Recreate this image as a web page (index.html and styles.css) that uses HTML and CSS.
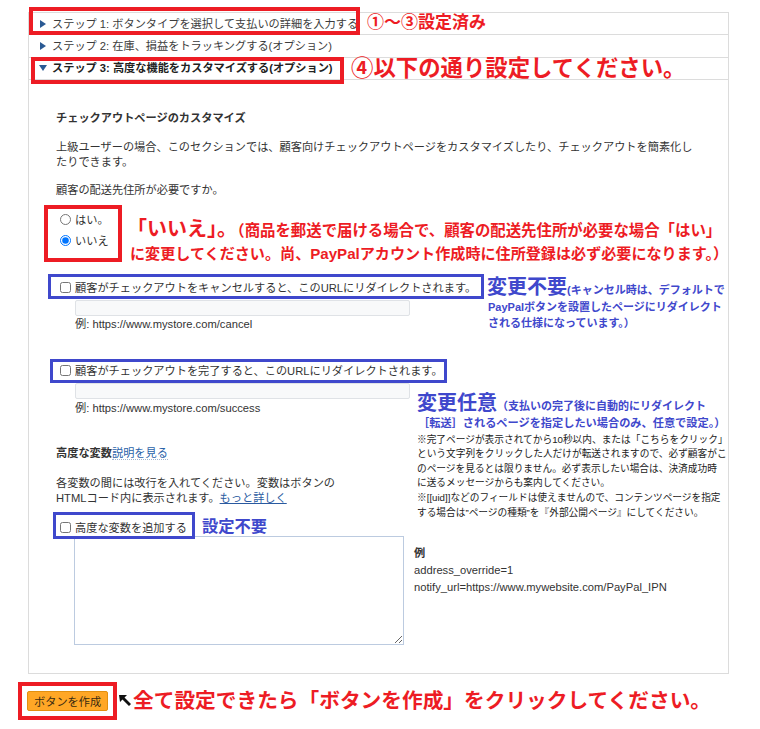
FILE: index.html
```html
<!DOCTYPE html>
<html lang="ja">
<head>
<meta charset="utf-8">
<title>ボタンの作成</title>
<link rel="stylesheet" href="styles.css">
</head>
<body>
<div class="page">
  <div class="steps">
    <div class="step"><span class="tri-r"></span>ステップ 1: ボタンタイプを選択して支払いの詳細を入力する</div>
    <div class="step"><span class="tri-r"></span>ステップ 2: 在庫、損益をトラッキングする(オプション)</div>
    <div class="step open"><span class="tri-d"></span>ステップ 3: 高度な機能をカスタマイズする(オプション)</div>
  </div>
  <div class="panel">
    <h3 class="title">チェックアウトページのカスタマイズ</h3>
    <p class="para">上級ユーザーの場合、このセクションでは、顧客向けチェックアウトページをカスタマイズしたり、チェックアウトを簡素化したりできます。</p>
    <p class="question">顧客の配送先住所が必要ですか。</p>
    <div class="radios">
      <label class="opt"><input type="radio" name="ship">はい。</label>
      <label class="opt"><input type="radio" name="ship" checked>いいえ</label>
    </div>
    <div class="redirect cancel">
      <label class="cb"><input type="checkbox">顧客がチェックアウトをキャンセルすると、このURLにリダイレクトされます。</label>
      <div class="field"></div>
      <p class="hint">例: https://www.mystore.com/cancel</p>
    </div>
    <div class="redirect success">
      <label class="cb"><input type="checkbox">顧客がチェックアウトを完了すると、このURLにリダイレクトされます。</label>
      <div class="field"></div>
      <p class="hint">例: https://www.mystore.com/success</p>
    </div>
    <div class="adv">
      <h4 class="adv-title">高度な変数<a class="help">説明を見る</a></h4>
      <p class="adv-desc">各変数の間には改行を入れてください。変数はボタンの<br>HTMLコード内に表示されます。<a class="more">もっと詳しく</a></p>
      <label class="cb adv-cb"><input type="checkbox">高度な変数を追加する</label>
      <div class="ta-row">
        <textarea class="vars"></textarea>
        <div class="example">
          <div class="ex-head">例</div>
          <div>address_override=1</div>
          <div>notify_url=https://www.mywebsite.com/PayPal_IPN</div>
        </div>
      </div>
    </div>
  </div>
  <button class="create" type="button">ボタンを作成</button>

  <div class="notes">
    <div class="box red r1"></div>
    <div class="box red r2"></div>
    <div class="box red r3"></div>
    <div class="box red r4"></div>
    <div class="box blue b1"></div>
    <div class="box blue b2"></div>
    <div class="box blue b3"></div>

    <div class="note red n1">①～③設定済み</div>
    <div class="note red n2">④以下の通り設定してください。</div>
    <div class="note red n3">
      <div class="n3-l1"><span class="big">「いいえ」。</span><span class="s1">（商品を郵送で届ける場合で、顧客の配送先住所が必要な場合「はい」</span></div>
      <div class="n3-l2">に変更してください。尚、PayPalアカウント作成時に住所登録は必ず必要になります。）</div>
    </div>
    <div class="note blue n4">
      <div class="l1"><span class="big">変更不要</span><span class="sm">(キャンセル時は、デフォルトで</span></div>
      <div class="l2">PayPalボタンを設置したページにリダイレクト</div>
      <div class="l2">される仕様になっています。）</div>
    </div>
    <div class="note blue n5">
      <div class="l1"><span class="big">変更任意</span><span class="sm">（支払いの完了後に自動的にリダイレクト</span></div>
      <div class="l2">［転送］されるページを指定したい場合のみ、任意で設定。）</div>
      <div class="small">※完了ページが表示されてから10秒以内、または「こちらをクリック」<br>という文字列をクリックした人だけが転送されますので、必ず顧客がこ<br>のページを見るとは限りません。必ず表示したい場合は、決済成功時<br>に送るメッセージからも案内してください。<br>※[[uid]]などのフィールドは使えませんので、コンテンツページを指定<br>する場合は”ページの種類”を『外部公開ページ』にしてください。</div>
    </div>
    <div class="note blue n6">設定不要</div>
    <svg class="arrow" width="14" height="14" viewBox="0 0 14 14"><path d="M1 2 L9 2 L6.5 4.5 L13 11 L11 13 L4.5 6.5 L2 9 Z" fill="#111"/></svg>
    <div class="note red n7">全て設定できたら「ボタンを作成」をクリックしてください。</div>
  </div>
</div>
</body>
</html>
```
FILE: styles.css
```css
* { box-sizing: border-box; }

body {
  margin: 0;
  background: #fff;
  font-family: "Liberation Sans", "Noto Sans CJK JP", sans-serif;
  font-size: 11.2px;
  color: #333;
}

.page {
  position: relative;
  width: 760px;
  height: 729px;
  padding-top: 12px;
  overflow: hidden;
}

/* accordion headers */
.steps {
  margin-left: 28px;
  width: 701px;
  border: 1px solid #dcdcdc;
  border-bottom: 0;
}
.step {
  height: 22.4px;
  border-bottom: 1px solid #dcdcdc;
  padding-left: 11px;
  display: flex;
  align-items: center;
  color: #3c3c3c;
  line-height: 14px;
}
.step.open { font-weight: bold; color: #222; padding-left: 10px; }
.tri-r {
  width: 0; height: 0;
  border-left: 6px solid #2a5a94;
  border-top: 4px solid transparent;
  border-bottom: 4px solid transparent;
  margin-right: 6px;
}
.tri-d {
  width: 0; height: 0;
  border-top: 6px solid #2a5a94;
  border-left: 4px solid transparent;
  border-right: 4px solid transparent;
  margin-right: 5px;
}

/* panel */
.panel {
  margin-left: 28px;
  width: 701px;
  border: 1px solid #dcdcdc;
  border-top: 0;
  padding: 30px 27px 28px 27px;
}
.title {
  margin: 0;
  font-size: 11.2px;
  line-height: 16px;
  font-weight: bold;
  color: #333;
}
.para, .question {
  margin: 14px 0 0;
  line-height: 14.4px;
}
.radios { margin-top: 11.3px; }
.opt {
  display: flex;
  align-items: center;
  height: 21px;
}
.opt input, .cb input {
  width: 11px;
  height: 11px;
  margin: 0 4px 0 4px;
}
.cb {
  display: flex;
  align-items: center;
  height: 18px;
}
.redirect.cancel { margin-top: 27.8px; }
.redirect.success { margin-top: 30.1px; }
.field {
  margin: 4px 0 0 19px;
  width: 335px;
  height: 16px;
  border: 1px solid #dfe2e6;
  border-radius: 2px;
  background: #f8f9fa;
}
.hint {
  margin: 0.5px 0 0 19px;
  line-height: 14.4px;
}
.success .hint { margin-top: 1.5px; }

.adv { margin-top: 30.1px; }
.adv-title {
  margin: 0;
  font-size: 11.2px;
  line-height: 16px;
  font-weight: bold;
}
.help {
  font-weight: normal;
  color: #2a62a8;
  border-bottom: 1px dotted #9fb4cf;
}
.adv-desc {
  margin: 15px 0 0;
  line-height: 14.4px;
}
.more {
  color: #2a5aa0;
  text-decoration: underline;
}
.adv-cb { margin-top: 13.2px; }
.ta-row {
  display: flex;
  margin-left: 18px;
}
.vars {
  display: block;
  width: 330px;
  height: 109px;
  margin: 0;
  border: 1px solid #bccbe0;
  background: #fff;
}
.example {
  margin-left: 10px;
  padding-top: 9px;
  line-height: 17px;
  color: #333;
}
.ex-head { font-weight: bold; }

.create {
  display: block;
  margin: 17px 0 0 27px;
  height: 20px;
  padding: 0 6px;
  font-family: "Liberation Sans", "Noto Sans CJK JP", sans-serif;
  font-size: 11.2px;
  color: #3a2a10;
  background: #ffa726;
  border: 1px solid #e3900f;
  border-radius: 2px;
}

/* annotation overlay */
.notes {
  position: absolute;
  inset: 0;
  pointer-events: none;
}
.box { position: absolute; }
.box.red { border: 4px solid #ed1c24; }
.box.blue { border: 3px solid #3f48cc; }
.r1 { left: 29px; top: 7px; width: 331px; height: 28px; }
.r2 { left: 31px; top: 57px; width: 313px; height: 27px; }
.r3 { left: 44px; top: 205px; width: 78px; height: 57px; border-width: 5px; }
.r4 { left: 18px; top: 682px; width: 99px; height: 38px; border-width: 5px; }
.b1 { left: 48px; top: 274px; width: 436px; height: 25px; }
.b2 { left: 50px; top: 359px; width: 397px; height: 24px; }
.b3 { left: 53px; top: 512px; width: 142px; height: 27px; }

.note {
  position: absolute;
  font-weight: bold;
  white-space: nowrap;
}
.note.red { color: #ed1c24; }
.note.blue { color: #3f48cc; }

.n1 { left: 367px; top: 13px; font-size: 17px; line-height: 20px; }
.n2 { left: 351px; top: 56px; font-size: 22.4px; line-height: 26px; }

.n3 { left: 127px; top: 216px; }
.n3-l1 { height: 27px; line-height: 27px; }
.n3 .big { font-size: 19.5px; }
.n3 .s1 { font-size: 15.4px; }
.n3-l2 { margin-left: 3px; height: 22px; line-height: 22px; font-size: 15.1px; }

.n4 { left: 487px; top: 276px; }
.n4 .l1, .n5 .l1 { height: 23px; line-height: 23px; }
.note .big { font-size: 20px; }
.note .sm { font-size: 11px; }
.note .l2 { font-size: 11px; height: 16px; line-height: 16px; margin-left: 1px; }
.n5 .l2 { font-size: 11.2px; }

.n5 { left: 417px; top: 392px; }
.n5 .small {
  margin-top: 1.7px;
  font-size: 9.7px;
  line-height: 14.6px;
  font-weight: normal;
  color: #222;
}

.n6 { left: 202px; top: 516px; font-size: 16.3px; line-height: 20px; }

.arrow { position: absolute; left: 118px; top: 693px; }
.n7 { left: 133px; top: 689px; font-size: 20.7px; line-height: 24px; }
```
